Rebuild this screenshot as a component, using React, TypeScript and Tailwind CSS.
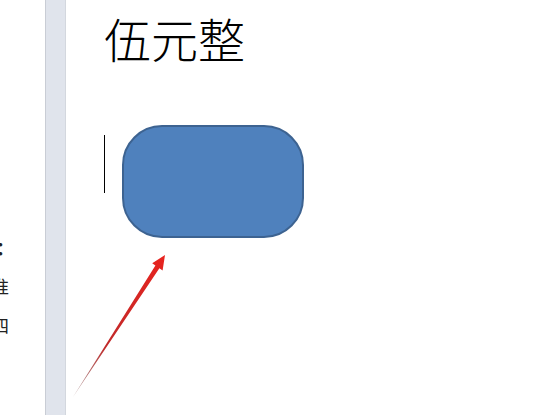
import React from "react";

export default function App() {
  return (
    <div className="relative flex h-[415px] w-[547px] overflow-hidden bg-white">
      {/* left page remnant */}
      <div
        className="w-[45px] shrink-0 overflow-hidden pt-[230px] text-[18px] leading-[39px] text-[#222]"
        style={{ fontFamily: '"Liberation Serif", "Noto Sans CJK SC", serif' }}
      >
        <div className="ml-[-4px] font-bold">：</div>
        <div className="ml-[-9px]">准</div>
        <div className="ml-[-9px]">四</div>
      </div>
      {/* gray gutter */}
      <div className="w-[21px] shrink-0 border-l border-r border-l-[#c9cdd5] border-r-[#d3d7de] bg-[#e0e4ec]" />
      {/* page */}
      <div className="flex-1 pl-[38px] pt-[14px]">
        <div
          className="text-[47px] font-light leading-none text-black"
          style={{ fontFamily: '"Noto Sans CJK SC", sans-serif' }}
        >
          伍元整
        </div>
        <div className="mt-[64px] flex items-start">
          <div className="mt-[10px] h-[58px] w-px bg-black" />
          <div className="ml-[17px] h-[113px] w-[182px] rounded-[40px] border-2 border-[#3d6391] bg-[#4f81bd]" />
        </div>
      </div>
      {/* red arrow */}
      <svg
        className="pointer-events-none absolute left-0 top-0"
        width="547"
        height="415"
        viewBox="0 0 547 415"
      >
        <defs>
          <linearGradient id="arr" x1="73" y1="397" x2="165" y2="255" gradientUnits="userSpaceOnUse">
            <stop offset="0" stopColor="#7a4a4a" stopOpacity="0.5" />
            <stop offset="0.35" stopColor="#c02a2a" />
            <stop offset="1" stopColor="#e8231e" />
          </linearGradient>
        </defs>
        <polygon
          points="73,397 159.4,268.2 162.6,270.4 165,255 152.2,263.3 155.4,265.5"
          fill="url(#arr)"
        />
      </svg>
    </div>
  );
}
